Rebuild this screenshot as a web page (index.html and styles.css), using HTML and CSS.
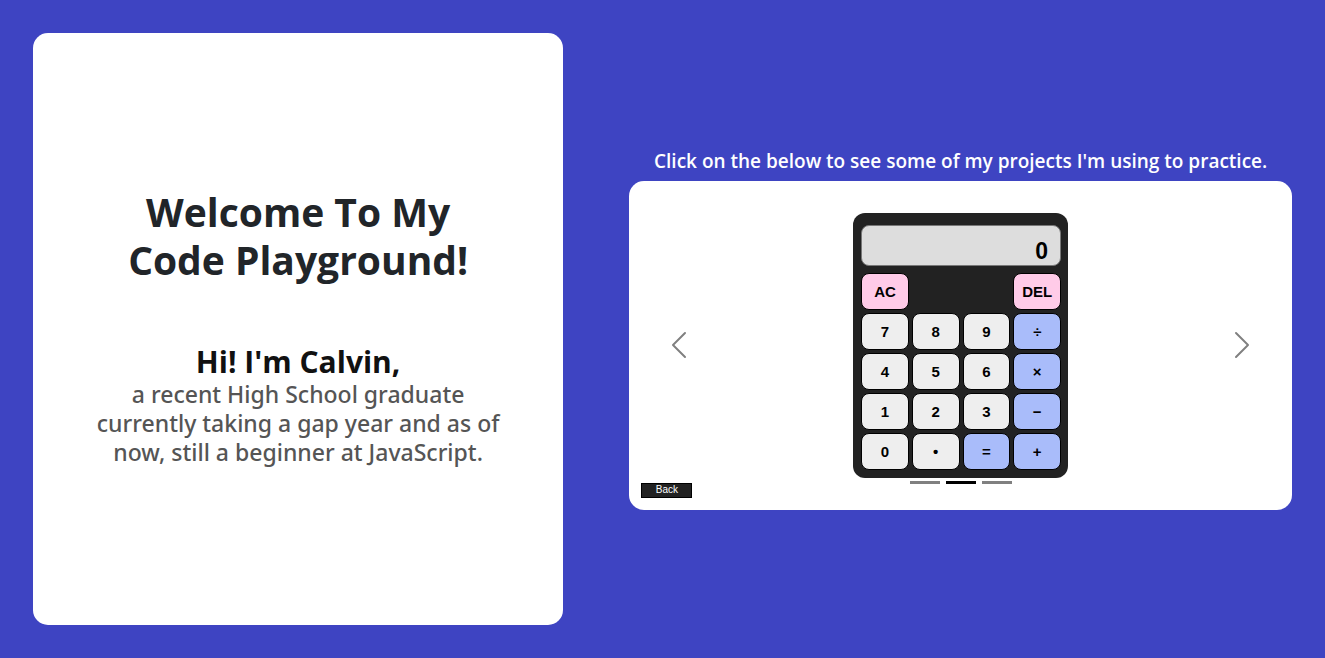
FILE: index.html
```html
<!DOCTYPE html>
<html lang="en">
<head>
<meta charset="utf-8">
<meta name="viewport" content="width=device-width, initial-scale=1">
<title>Code Playground</title>
<link rel="stylesheet" href="styles.css">
</head>
<body>
<main class="page">
  <section class="intro">
    <h1 class="intro-title">Welcome To My<br>Code Playground!</h1>
    <div class="intro-about">
      <h2 class="intro-name">Hi! I'm Calvin,</h2>
      <p class="intro-text">a recent High School graduate<br>currently taking a gap year and as of<br>now, still a beginner at JavaScript.</p>
    </div>
  </section>
  <section class="projects">
    <h2 class="projects-title">Click on the below to see some of my projects I'm using to practice.</h2>
    <div class="carousel">
      <button class="arrow arrow-prev" type="button" aria-label="Previous">
        <svg class="arrow-icon" viewBox="0 0 16 16" aria-hidden="true"><path d="M11.354 1.646a.5.5 0 0 1 0 .708L5.707 8l5.647 5.646a.5.5 0 0 1-.708.708l-6-6a.5.5 0 0 1 0-.708l6-6a.5.5 0 0 1 .708 0z"/></svg>
      </button>
      <div class="calculator">
        <output class="display">0</output>
        <div class="keys">
          <button class="key key-clear" type="button">AC</button>
          <button class="key key-clear key-last" type="button">DEL</button>
          <button class="key" type="button">7</button>
          <button class="key" type="button">8</button>
          <button class="key" type="button">9</button>
          <button class="key key-op" type="button">÷</button>
          <button class="key" type="button">4</button>
          <button class="key" type="button">5</button>
          <button class="key" type="button">6</button>
          <button class="key key-op" type="button">×</button>
          <button class="key" type="button">1</button>
          <button class="key" type="button">2</button>
          <button class="key" type="button">3</button>
          <button class="key key-op" type="button">−</button>
          <button class="key" type="button">0</button>
          <button class="key" type="button">•</button>
          <button class="key key-op" type="button">=</button>
          <button class="key key-op" type="button">+</button>
        </div>
      </div>
      <button class="arrow arrow-next" type="button" aria-label="Next">
        <svg class="arrow-icon" viewBox="0 0 16 16" aria-hidden="true"><path d="M4.646 1.646a.5.5 0 0 1 .708 0l6 6a.5.5 0 0 1 0 .708l-6 6a.5.5 0 0 1-.708-.708L10.293 8 4.646 2.354a.5.5 0 0 1 0-.708z"/></svg>
      </button>
      <button class="back" type="button">Back</button>
      <div class="indicators">
        <button class="indicator" type="button" aria-label="Slide 1"></button>
        <button class="indicator indicator-active" type="button" aria-label="Slide 2"></button>
        <button class="indicator" type="button" aria-label="Slide 3"></button>
      </div>
    </div>
  </section>
</main>
</body>
</html>
```

FILE: styles.css
```css
* {
  box-sizing: border-box;
}

body {
  margin: 0;
  background: #3e44c2;
  color: #212529;
  font-family: "Segoe UI", "Open Sans", "Noto Sans", sans-serif;
}

h1,
h2,
p {
  margin: 0;
}

.page {
  display: grid;
  grid-template-columns: 4fr 5fr;
  gap: 5vw;
  min-height: 100vh;
  padding: 5vh 2.5vw;
}

.intro {
  display: flex;
  flex-direction: column;
  align-items: center;
  justify-content: center;
  gap: 60px;
  padding-bottom: 4px;
  border-radius: 15px;
  background: #fff;
  text-align: center;
}

.intro-title {
  font-size: 39px;
  font-weight: 700;
  line-height: 48px;
}

.intro-name {
  color: #111;
  font-size: 30px;
  font-weight: 700;
  line-height: 36px;
}

.intro-text {
  color: #555;
  font-family: "Segoe UI", "Noto Sans", "Open Sans", sans-serif;
  font-size: 23px;
  font-weight: 500;
  line-height: 29px;
}

.projects {
  display: flex;
  flex-direction: column;
  justify-content: center;
  gap: 7px;
}

.projects-title {
  color: #fff;
  font-size: 19px;
  font-weight: 600;
  line-height: 25px;
  text-align: center;
}

.carousel {
  position: relative;
  display: grid;
  grid-template-columns: 15% auto 15%;
  justify-content: space-between;
  align-items: center;
  padding: 32px 0;
  border-radius: 15px;
  background: #fff;
}

.arrow {
  display: flex;
  align-items: center;
  justify-content: center;
  border: 0;
  padding: 0;
  background: none;
}

.arrow-icon {
  width: 32px;
  height: 32px;
  fill: #808080;
}

.calculator {
  display: grid;
  gap: 7px;
  width: 215px;
  padding: 12px 7px 8px 8px;
  border-radius: 12px;
  background: #222;
  font-family: "Liberation Sans", Arial, sans-serif;
}

.display {
  display: block;
  height: 41px;
  padding: 11px 12px 0;
  border: 1px solid #777;
  border-radius: 8px;
  background: #ddd;
  color: #000;
  font-size: 23px;
  font-weight: 700;
  line-height: 28px;
  text-align: right;
}

.keys {
  display: grid;
  grid-template-columns: repeat(4, 1fr);
  gap: 3px;
}

.key {
  height: 37px;
  padding: 1px 0 0;
  border: 1px solid #000;
  border-radius: 8px;
  background: #eee;
  color: #000;
  font: 700 15px/20px "Liberation Sans", Arial, sans-serif;
}

.key-clear {
  background: #ffcbe8;
}

.key-last {
  grid-column: 4;
}

.key-op {
  background: #a9bcfa;
}

.back {
  position: absolute;
  bottom: 12px;
  left: 12px;
  width: 51px;
  height: 15px;
  padding: 0;
  border: 1px solid #000;
  background: #222;
  color: #fff;
  font: 10px/12px "Liberation Sans", Arial, sans-serif;
}

.indicators {
  position: absolute;
  right: 0;
  bottom: 26px;
  left: 0;
  display: flex;
  justify-content: center;
  gap: 6px;
}

.indicator {
  width: 30px;
  height: 3px;
  padding: 0;
  border: 0;
  background: #808080;
}

.indicator-active {
  background: #000;
}
```
